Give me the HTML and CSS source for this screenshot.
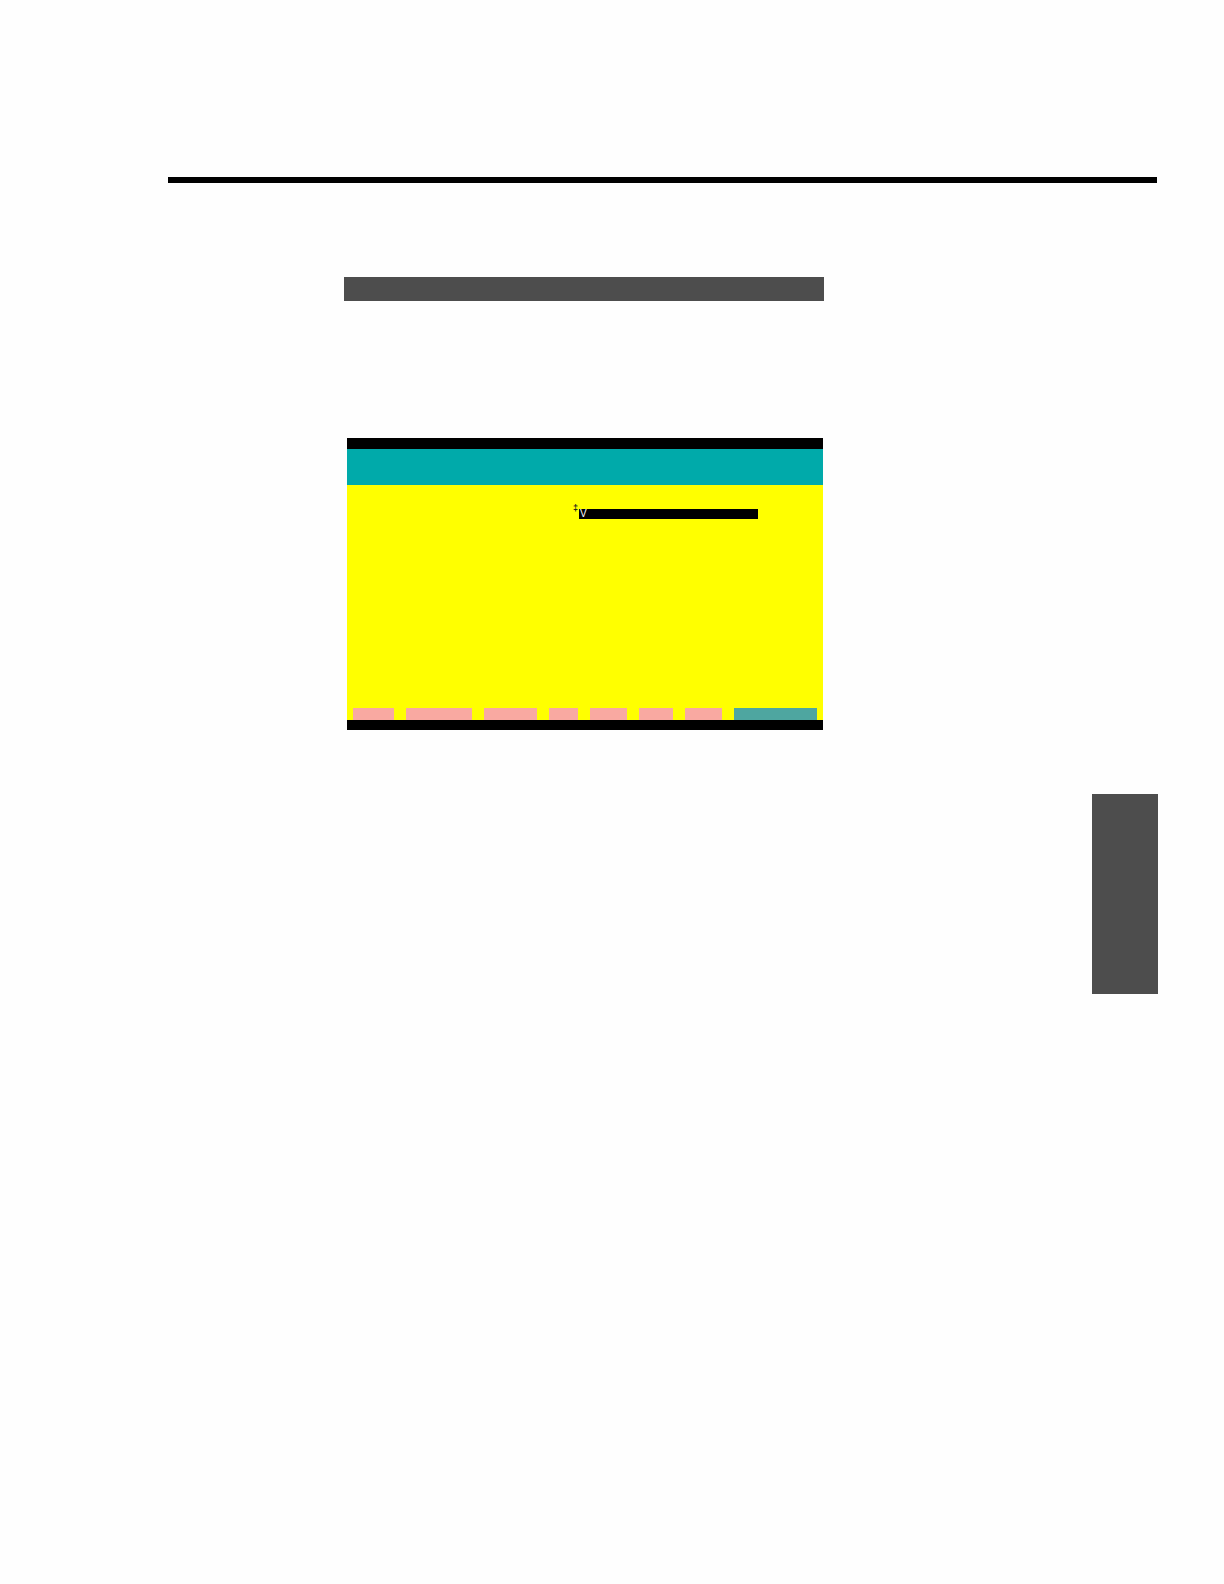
FILE: index.html
```html
<!DOCTYPE html>
<html>
<head>
<meta charset="utf-8">
<link rel="stylesheet" href="styles.css">
</head>
<body>
<div class="page">
  <div class="rule"></div>
  <div class="heading-bar"></div>
  <div class="screen">
    <div class="screen-top"></div>
    <div class="screen-title"></div>
    <div class="screen-body">
      <div class="field-row">
        <span class="cursor-mark">‡</span>
        <div class="field"><span class="field-text">V</span></div>
      </div>
      <div class="fkeys">
        <div class="fkey k1"></div>
        <div class="fkey k2"></div>
        <div class="fkey k3"></div>
        <div class="fkey k4"></div>
        <div class="fkey k5"></div>
        <div class="fkey k6"></div>
        <div class="fkey k7"></div>
        <div class="fkey active k8"></div>
      </div>
    </div>
    <div class="screen-bottom"></div>
  </div>
  <div class="thumb-tab"></div>
</div>
</body>
</html>
```

FILE: styles.css
```css
html, body {
  margin: 0;
  padding: 0;
  background: #fefefe;
  font-family: "Liberation Sans", Arial, sans-serif;
}

.page {
  width: 1224px;
  height: 1584px;
  box-sizing: border-box;
  padding-top: 177px;
  padding-left: 168px;
}

.rule {
  width: 989px;
  height: 6px;
  background: #000;
}

.heading-bar {
  margin-top: 94px;
  margin-left: 176px;
  width: 480px;
  height: 24px;
  background: #4d4d4d;
}

.screen {
  margin-top: 137px;
  margin-left: 179px;
  width: 476px;
  display: flex;
  flex-direction: column;
}

.screen-top {
  height: 11px;
  background: #000;
}

.screen-title {
  height: 36px;
  background: #00aaaa;
}

.screen-body {
  height: 235px;
  background: #ffff00;
  display: flex;
  flex-direction: column;
  justify-content: space-between;
  box-sizing: border-box;
  padding-top: 19px;
}

.field-row {
  display: flex;
  align-items: flex-start;
  padding-left: 226px;
  height: 16px;
}

.cursor-mark {
  width: 6px;
  font-size: 9px;
  line-height: 9px;
  font-weight: bold;
  color: #222;
}

.field {
  margin-top: 5px;
  width: 179px;
  height: 10px;
  background: #000;
  display: flex;
  align-items: center;
}

.field-text {
  color: #fff;
  font-size: 10px;
  line-height: 10px;
  padding-left: 1px;
}

.fkeys {
  display: flex;
  gap: 12px;
  padding-left: 6px;
  height: 12px;
}

.fkey {
  height: 12px;
  background: #f9a9a1;
}

.fkey.active {
  background: #4ea6a0;
}

.k1 { width: 41px; }
.k2 { width: 66px; }
.k3 { width: 53px; }
.k4 { width: 29px; }
.k5 { width: 37px; }
.k6 { width: 34px; }
.k7 { width: 37px; }
.k8 { width: 83px; }

.screen-bottom {
  height: 10px;
  background: #000;
}

.thumb-tab {
  margin-top: 64px;
  margin-left: 924px;
  width: 66px;
  height: 200px;
  background: #4d4d4d;
}
```
